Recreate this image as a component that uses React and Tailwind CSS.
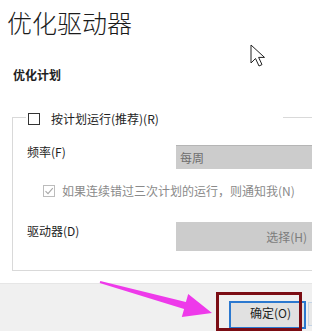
export default function App() {
  return (
    <div className="relative w-[312px] h-[331px] overflow-hidden bg-white flex flex-col font-['Noto_Sans_CJK_SC','Noto_Sans',sans-serif] text-[#1e1e1e]">
      <div className="pt-[6px] pl-[7px] text-[25px] leading-[32px] font-light text-[#1b1b1b] whitespace-nowrap">优化驱动器</div>
      <div className="mt-[29px] pl-[13px] text-[12px] leading-[16px] font-bold whitespace-nowrap">优化计划</div>
      <fieldset className="ml-[12px] mt-[24px] w-[330px] border border-[#d9d9d9] pb-[19px]">
        <legend className="ml-[13px] w-[257px] h-[20px] pl-[2px] pt-[4px] bg-white">
          <div className="flex items-center h-[16px]">
            <div className="w-[12px] h-[12px] border border-[#333] bg-white" />
            <span className="ml-[11px] text-[12px] leading-[16px] whitespace-nowrap">按计划运行(推荐)(R)</span>
          </div>
        </legend>
        <div className="mt-[18px] flex items-start">
          <div className="w-[163px] pl-[14px] -mt-[1px] text-[12px] leading-[16px] whitespace-nowrap">频率(F)</div>
          <div className="w-[150px] h-[24px] bg-[#cccccc] border-t border-[#b5b5b5] flex items-center pl-[4px] text-[12px] text-[#6e6e6e]">每周</div>
        </div>
        <div className="mt-[14px] pl-[30px] flex items-center h-[16px]">
          <div className="w-[12px] h-[12px] border border-[#bcbcbc] flex items-center justify-center">
            <svg width="10" height="10" viewBox="0 0 10 10">
              <path d="M1.5 5.2 L4 7.6 L8.8 2.2" fill="none" stroke="#a8a8a8" strokeWidth="1.1" />
            </svg>
          </div>
          <span className="ml-[7px] text-[12px] leading-[16px] text-[#8a8a8a] whitespace-nowrap">如果连续错过三次计划的运行，则通知我(N)</span>
        </div>
        <div className="mt-[23px] flex items-start">
          <div className="w-[163px] pl-[14px] mt-[1px] text-[12px] leading-[16px] whitespace-nowrap">驱动器(D)</div>
          <div className="w-[136px] h-[29px] bg-[#cccccc] flex items-center justify-end pr-[5px] text-[12px] text-[#7c7c7c]">选择(H)</div>
        </div>
      </fieldset>
      <div className="mt-[12px] flex-1 bg-[#f0f0f0] border-t border-[#e6e6e6] pt-[17px] pl-[229px] flex items-start">
        <div className="w-[77px] h-[28px] border-2 border-[#2b78cf] bg-[#e1e1e1] pl-[19px] pt-[2px] text-[12px] leading-[16px] text-[#1e1e1e] whitespace-nowrap shrink-0">确定(O)</div>
        <div className="ml-[2px] w-[40px] h-[24px] mt-[1px] border border-[#c4d4e6] bg-[#e8e8e8] shrink-0" />
      </div>
      <div className="absolute left-[216px] top-[292px] w-[86px] h-[39px] border-[3px] border-[#7b0d14]" />
      <svg className="absolute left-0 top-0 pointer-events-none" width="312" height="331" viewBox="0 0 312 331">
        <polygon points="100.3,281 185.9,302.1 188.2,293.9 212,313 181.8,317.1 184.1,308.9 99.7,283" fill="#ee3aea" />
        <polygon points="251,45 251,63 255.5,58.5 259,66 262,64.6 258.6,57.4 264.5,57.4" fill="white" stroke="#222" strokeWidth="1" strokeLinejoin="miter" />
      </svg>
    </div>
  );
}
